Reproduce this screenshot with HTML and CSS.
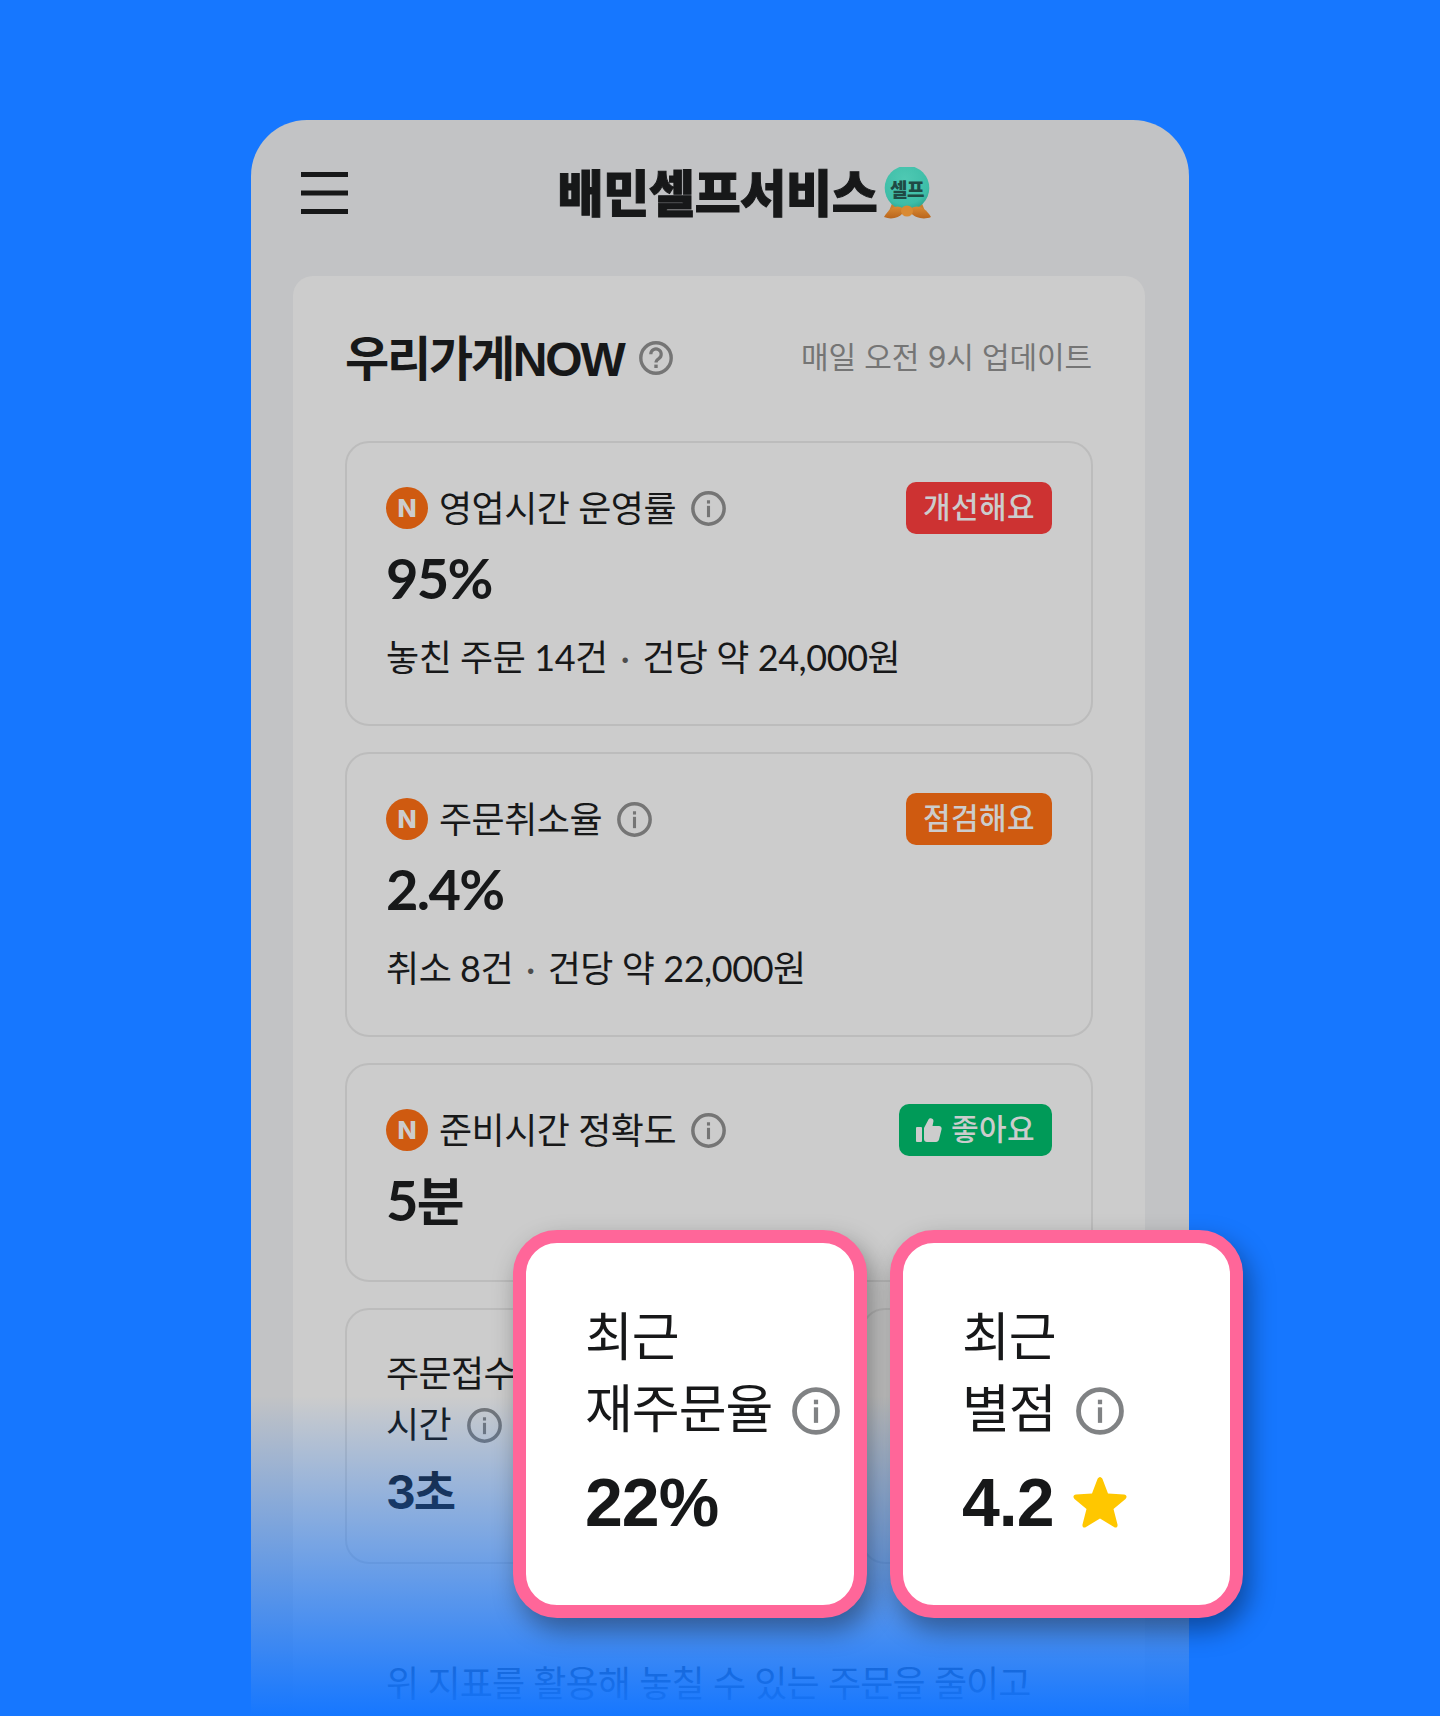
FILE: index.html
```html
<!DOCTYPE html>
<html lang="ko">
<head>
<meta charset="utf-8">
<title>배민셀프서비스</title>
<link rel="stylesheet" href="styles.css">
</head>
<body>
<svg class="sprite" width="0" height="0" aria-hidden="true">
  <symbol id="info" viewBox="0 0 34 34">
    <circle cx="17" cy="17" r="15.2" fill="none" stroke="currentColor" stroke-width="3.4"/>
    <rect x="15.5" y="14.4" width="3" height="11" fill="currentColor"/>
    <rect x="15.5" y="9" width="3" height="3.2" fill="currentColor"/>
  </symbol>
</svg>
<main class="phone">
  <header class="topbar">
    <svg class="burger" viewBox="0 0 47 42" aria-hidden="true">
      <rect x="0" y="0" width="47" height="5" fill="#171819"/>
      <rect x="0" y="18.500" width="47" height="5" fill="#171819"/>
      <rect x="0" y="37" width="47" height="5" fill="#171819"/>
    </svg>
    <div class="logo">
      <span class="logo-text">배민셀프서비스</span>
      <svg class="emblem" viewBox="0 0 48 52" aria-hidden="true">
        <defs>
          <radialGradient id="ball" cx="45%" cy="30%" r="75%">
            <stop offset="0" stop-color="#4fc9b3"/>
            <stop offset="0.75" stop-color="#3dbda7"/>
            <stop offset="1" stop-color="#2a9f8c"/>
          </radialGradient>
          <linearGradient id="bow" x1="0" y1="0" x2="0" y2="1">
            <stop offset="0" stop-color="#d98a33"/>
            <stop offset="1" stop-color="#b9651c"/>
          </linearGradient>
        </defs>
        <path d="M9 34 L5 44 L41 44 L37 34Z" fill="#c9802f"/>
        <circle cx="23" cy="21" r="22.300" fill="url(#ball)"/>
        <text x="23" y="29.500" text-anchor="middle" class="emblem-text">셀프</text>
        <path d="M19 42 C14 37 6 40 0 50 C7 53 15 51 19 46Z" fill="url(#bow)"/>
        <path d="M27 42 C32 37 41 40 47 50 C40 53 31 51 27 46Z" fill="url(#bow)"/>
        <ellipse cx="23" cy="44" rx="6" ry="5.500" fill="#d98a33"/>
      </svg>
    </div>
  </header>

  <section class="panel">
    <div class="panel-head">
      <h1 class="panel-title">우리가게NOW
        <svg class="help" viewBox="0 0 34 34" aria-hidden="true">
          <circle cx="17" cy="17" r="15.200" fill="none" stroke="#757575" stroke-width="3.400"/>
          <path d="M11.800 13.200a5.200 5.200 0 1 1 8 4.400c-1.800 1.200-2.800 2-2.800 4" fill="none" stroke="#757575" stroke-width="3.200"/>
          <rect x="15.300" y="23.600" width="3.400" height="3.400" fill="#757575"/>
        </svg>
      </h1>
      <p class="panel-note">매일 오전 9시 업데이트</p>
    </div>

    <div class="cards">
      <article class="card">
        <div class="card-head">
          <div class="label"><span class="badge-n">N</span><span class="label-text">영업시간 운영률</span><svg class="info"><use href="#info"/></svg></div>
          <span class="chip chip-red">개선해요</span>
        </div>
        <div class="value">95%</div>
        <p class="sub">놓친 주문 14건 <span class="dot">·</span> 건당 약 24,000원</p>
      </article>

      <article class="card">
        <div class="card-head">
          <div class="label"><span class="badge-n">N</span><span class="label-text">주문취소율</span><svg class="info"><use href="#info"/></svg></div>
          <span class="chip chip-orange">점검해요</span>
        </div>
        <div class="value">2.4%</div>
        <p class="sub">취소 8건 <span class="dot">·</span> 건당 약 22,000원</p>
      </article>

      <article class="card card-short">
        <div class="card-head">
          <div class="label"><span class="badge-n">N</span><span class="label-text">준비시간 정확도</span><svg class="info"><use href="#info"/></svg></div>
          <span class="chip chip-green">
            <svg class="thumb" viewBox="0 0 26 24" aria-hidden="true">
              <rect x="0" y="9" width="6" height="15" rx="1" fill="currentColor"/>
              <path d="M8 10 L12.500 1.500 C13.500 -0.500 17.500 0 17.500 3 L16.500 8 L23 8 C25 8 26 9.500 25.500 11.500 L23 21.500 C22.500 23 21.500 24 20 24 L11 24 C9.200 24 8 22.800 8 21Z" fill="currentColor"/>
            </svg>좋아요</span>
        </div>
        <div class="value">5<span class="unit">분</span></div>
      </article>

      <div class="mini-row">
        <article class="card mini">
          <div class="mini-label">주문접수 시간<svg class="info"><use href="#info"/></svg></div>
          <div class="mini-value">3초</div>
        </article>
        <article class="card mini"></article>
        <article class="card mini"></article>
      </div>
    </div>

    <p class="footnote">위 지표를 활용해 놓칠 수 있는 주문을 줄이고</p>
  </section>
  <div class="fade"></div>
</main>

<aside class="pop pop-left">
  <div class="pop-label">최근<br>재주문율<svg class="pop-info"><use href="#info"/></svg></div>
  <div class="pop-value">22%</div>
</aside>
<aside class="pop pop-right">
  <div class="pop-label">최근<br>별점<svg class="pop-info"><use href="#info"/></svg></div>
  <div class="pop-value">4.2<svg class="star" viewBox="0 0 54 52" aria-hidden="true"><path d="M27 1 C28 1 29 2 29.500 3 L35 17.500 L51 18.500 C53.500 18.800 54.500 21 52.500 23 L40.500 33 L44.500 48.500 C45 51 43 52.500 41 51 L27 42.500 L13 51 C11 52.500 9 51 9.500 48.500 L13.500 33 L1.500 23 C-0.500 21 0.500 18.800 3 18.500 L19 17.500 L24.500 3 C25 2 26 1 27 1Z" fill="#ffc700"/></svg></div>
</aside>
</body>
</html>
```

FILE: styles.css
```css
* { box-sizing: border-box; }

html, body {
  margin: 0;
  padding: 0;
}

body {
  position: relative;
  height: 1716px;
  overflow: hidden;
  background: #1677ff;
  color: #171819;
  font-family: "Lato", "Noto Sans CJK KR", sans-serif;
}

.sprite { position: absolute; }

.phone {
  position: relative;
  width: 938px;
  height: 1596px;
  margin: 120px auto 0;
  padding: 0 44px 0 42px;
  background: #c2c3c5;
  border-radius: 56px 56px 0 0;
  overflow: hidden;
}

.topbar {
  position: relative;
  display: flex;
  align-items: center;
  justify-content: center;
  height: 156px;
}

.burger {
  position: absolute;
  left: 8px;
  top: 52px;
  width: 47px;
  height: 42px;
}

.logo {
  display: flex;
  align-items: center;
  gap: 7px;
  margin-left: 52px;
  margin-top: -16px;
}

.logo-text {
  font-family: "Noto Sans CJK KR", sans-serif;
  font-weight: 900;
  font-size: 50px;
  line-height: 60px;
  letter-spacing: -0.3px;
  color: #171819;
  -webkit-text-stroke: 1px #171819;
}

.emblem {
  width: 48px;
  height: 52px;
  margin-top: 5px;
}

.emblem-text {
  font-family: "Noto Sans CJK KR", sans-serif;
  font-weight: 900;
  font-size: 19px;
  letter-spacing: -0.5px;
  fill: #1f4a44;
}

.panel {
  height: 1500px;
  padding: 0 52px;
  background: #cccccc;
  border-radius: 20px 20px 0 0;
}

.panel-head {
  display: flex;
  align-items: center;
  justify-content: space-between;
  height: 165px;
  padding-bottom: 8px;
}

.panel-title {
  display: flex;
  align-items: center;
  gap: 15px;
  margin: 0;
  font-family: "Liberation Sans", "Noto Sans CJK KR", sans-serif;
  font-weight: 700;
  font-size: 48px;
  letter-spacing: -2.2px;
}

.help {
  width: 34px;
  height: 34px;
  margin-top: 6px;
}

.panel-note {
  margin: 0 1px 0 0;
  font-family: "Inter", "Noto Sans CJK KR", sans-serif;
  font-size: 30px;
  letter-spacing: -0.1px;
  color: #757575;
}

.cards {
  display: flex;
  flex-direction: column;
  gap: 26px;
}

.card {
  padding: 39px;
  border: 2px solid #bcbcbc;
  border-radius: 24px;
}

.card-short {
  padding-bottom: 41px;
}

.card-head {
  display: flex;
  justify-content: space-between;
  height: 52px;
}

.label {
  display: flex;
  align-items: center;
  font-size: 36px;
  letter-spacing: -0.5px;
}

.label-text {
  margin-bottom: 4px;
}

.badge-n {
  display: flex;
  align-items: center;
  justify-content: center;
  width: 42px;
  height: 42px;
  margin-right: 11px;
  border-radius: 50%;
  background: #cf5a10;
  color: #cccccc;
  font-family: "Inter", sans-serif;
  font-weight: 800;
  font-size: 25px;
  letter-spacing: 0;
}

.info {
  width: 35px;
  height: 35px;
  margin-left: 15px;
  color: #757575;
}

.chip {
  display: flex;
  align-items: center;
  height: 52px;
  padding: 0 17px 6px;
  border-radius: 10px;
  color: #cccccc;
  font-size: 30px;
  font-weight: 500;
  letter-spacing: 0.4px;
}

.chip-red { background: #cd3232; }
.chip-orange { background: #cf5a10; }
.chip-green { background: #009a58; }

.thumb {
  width: 26px;
  height: 24px;
  margin-right: 9px;
  margin-top: 6px;
}

.value {
  margin-top: 6px;
  font-weight: 700;
  font-size: 56px;
  line-height: 76px;
  letter-spacing: -1.7px;
}

.unit {
  font-size: 52px;
}

.sub {
  margin: 16px 0 3px;
  font-size: 36px;
  line-height: 50px;
  letter-spacing: -0.45px;
}

.dot {
  margin: 0 4px;
  color: #4d4d4d;
}

.mini-row {
  display: grid;
  grid-template-columns: repeat(3, 1fr);
  gap: 26px;
}

.mini {
  height: 256px;
}

.mini-label {
  margin-top: 0;
  font-family: "Inter", "Noto Sans CJK KR", sans-serif;
  font-size: 36px;
  line-height: 51px;
  letter-spacing: -0.6px;
}

.mini-label .info {
  margin-left: 16px;
  vertical-align: -5px;
}

.mini-value {
  margin-top: 11px;
  font-family: "Inter", "Noto Sans CJK KR", sans-serif;
  font-weight: 700;
  font-size: 46px;
  line-height: 60px;
  letter-spacing: -2px;
}

.footnote {
  margin: 95px 0 0 41px;
  font-family: "Inter", "Noto Sans CJK KR", sans-serif;
  font-size: 36px;
  line-height: 50px;
  letter-spacing: -0.9px;
  white-space: nowrap;
}

.fade {
  position: absolute;
  left: 0;
  right: 0;
  bottom: 0;
  height: 320px;
  background: linear-gradient(to bottom, rgba(22, 119, 255, 0), #1677ff);
}

.pop {
  position: absolute;
  top: 1230px;
  width: 353px;
  height: 388px;
  padding: 59px 0 0 59px;
  background: #ffffff;
  border: 13px solid #ff6699;
  border-radius: 44px;
  box-shadow: 6px 12px 26px rgba(0, 0, 0, 0.38);
  font-family: "Liberation Sans", "Noto Sans CJK KR", sans-serif;
}

.pop-left {
  left: 513px;
  width: 354px;
}

.pop-right { left: 890px; }

.pop-label {
  font-size: 52px;
  line-height: 72px;
  white-space: nowrap;
  letter-spacing: -1px;
}

.pop-info {
  width: 48px;
  height: 48px;
  margin-left: 20px;
  vertical-align: -7px;
  color: #808284;
}

.pop-value {
  display: flex;
  align-items: center;
  margin-top: 12px;
  font-weight: 700;
  font-size: 68px;
  line-height: 88px;
  letter-spacing: -1px;
}

.star {
  width: 54px;
  height: 52px;
  margin-left: 19px;
}
```
